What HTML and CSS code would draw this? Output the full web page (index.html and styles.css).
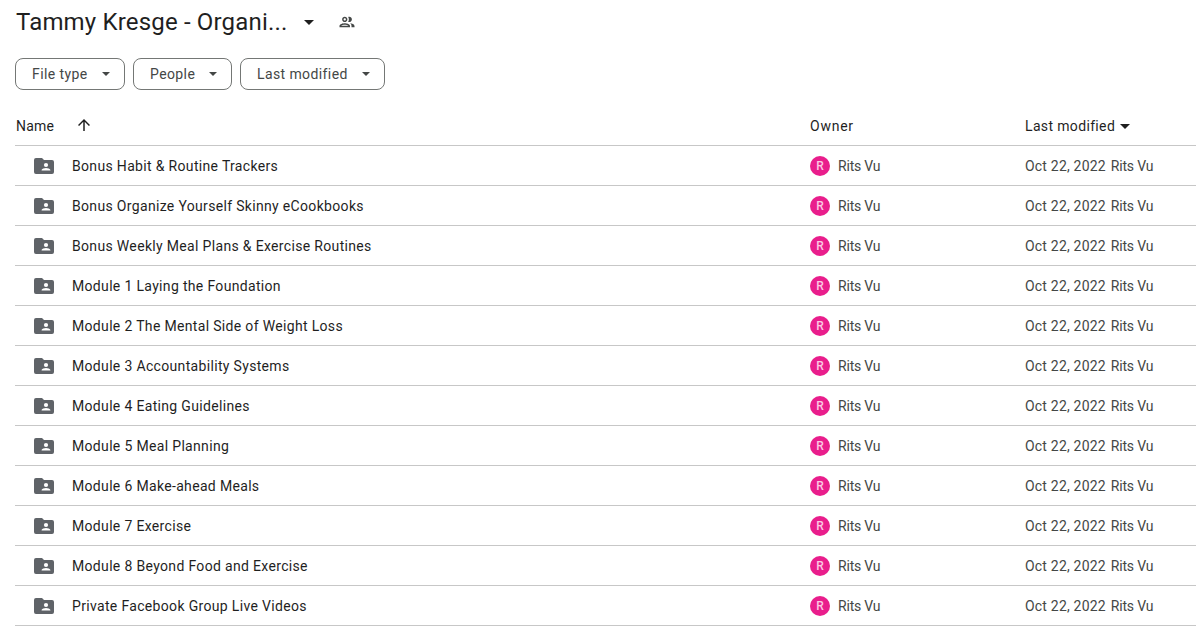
FILE: index.html
```html
<!DOCTYPE html>
<html lang="en">
<head>
<meta charset="utf-8">
<title>Tammy Kresge - Organize Yourself Skinny</title>
<link rel="stylesheet" href="styles.css">
</head>
<body>
<div class="page">
  <header class="title-bar">
    <h1 class="title">Tammy Kresge - Organi...</h1>
    <svg class="title-caret" viewBox="0 0 10 5"><path d="M0 0h10L5 5z"/></svg>
    <svg class="shared-icon" viewBox="0 0 24 24"><path d="M9 13.75c-2.34 0-7 1.17-7 3.5V19h14v-1.75c0-2.33-4.66-3.5-7-3.5zM4.34 17c.84-.58 2.87-1.25 4.66-1.25s3.82.67 4.66 1.25H4.34zM9 12c1.93 0 3.5-1.57 3.5-3.5S10.93 5 9 5 5.5 6.57 5.5 8.5 7.07 12 9 12zm0-5c.83 0 1.5.67 1.5 1.5S9.83 10 9 10s-1.5-.67-1.5-1.5S8.17 7 9 7zm7.04 6.81c1.16.84 1.96 1.96 1.96 3.44V19h4v-1.75c0-2.02-3.5-3.17-5.96-3.44zM15 12c1.93 0 3.5-1.57 3.5-3.5S16.93 5 15 5c-.54 0-1.04.13-1.5.35.63.89 1 1.98 1 3.15s-.37 2.26-1 3.15c.46.22.96.35 1.5.35z"/></svg>
  </header>
  <div class="filters">
    <button class="chip chip-type">File type<svg class="chip-caret" viewBox="0 0 10 5"><path d="M0 0h10L5 5z"/></svg></button>
    <button class="chip chip-people">People<svg class="chip-caret" viewBox="0 0 10 5"><path d="M0 0h10L5 5z"/></svg></button>
    <button class="chip chip-modified">Last modified<svg class="chip-caret" viewBox="0 0 10 5"><path d="M0 0h10L5 5z"/></svg></button>
  </div>
  <div class="table">
    <div class="row head">
      <div class="col-name">Name<svg class="sort-arrow" viewBox="0 0 24 24"><path d="M4 12l1.41 1.41L11 7.83V20h2V7.83l5.58 5.59L20 12l-8-8-8 8z"/></svg></div>
      <div class="col-owner">Owner</div>
      <div class="col-date">Last modified<svg class="head-caret" viewBox="0 0 10 5"><path d="M0 0h10L5 5z"/></svg></div>
    </div>
    <div class="row"><div class="col-name"><svg class="folder" viewBox="0 0 20 16"><path d="M2 0h6l2 2h8a2 2 0 0 1 2 2v10a2 2 0 0 1-2 2H2a2 2 0 0 1-2-2V2a2 2 0 0 1 2-2z"/><circle class="fig" cx="12" cy="7" r="2.1"/><path class="fig" d="M7.6 12.6v-.6c0-1.4 2.9-2.1 4.4-2.1s4.4.7 4.4 2.1v.6z"/></svg><span>Bonus Habit &amp; Routine Trackers</span></div><div class="col-owner"><span class="avatar">R</span><span class="person">Rits Vu</span></div><div class="col-date"><span class="date">Oct 22, 2022</span><span class="person">Rits Vu</span></div></div>
    <div class="row"><div class="col-name"><svg class="folder" viewBox="0 0 20 16"><path d="M2 0h6l2 2h8a2 2 0 0 1 2 2v10a2 2 0 0 1-2 2H2a2 2 0 0 1-2-2V2a2 2 0 0 1 2-2z"/><circle class="fig" cx="12" cy="7" r="2.1"/><path class="fig" d="M7.6 12.6v-.6c0-1.4 2.9-2.1 4.4-2.1s4.4.7 4.4 2.1v.6z"/></svg><span>Bonus Organize Yourself Skinny eCookbooks</span></div><div class="col-owner"><span class="avatar">R</span><span class="person">Rits Vu</span></div><div class="col-date"><span class="date">Oct 22, 2022</span><span class="person">Rits Vu</span></div></div>
    <div class="row"><div class="col-name"><svg class="folder" viewBox="0 0 20 16"><path d="M2 0h6l2 2h8a2 2 0 0 1 2 2v10a2 2 0 0 1-2 2H2a2 2 0 0 1-2-2V2a2 2 0 0 1 2-2z"/><circle class="fig" cx="12" cy="7" r="2.1"/><path class="fig" d="M7.6 12.6v-.6c0-1.4 2.9-2.1 4.4-2.1s4.4.7 4.4 2.1v.6z"/></svg><span>Bonus Weekly Meal Plans &amp; Exercise Routines</span></div><div class="col-owner"><span class="avatar">R</span><span class="person">Rits Vu</span></div><div class="col-date"><span class="date">Oct 22, 2022</span><span class="person">Rits Vu</span></div></div>
    <div class="row"><div class="col-name"><svg class="folder" viewBox="0 0 20 16"><path d="M2 0h6l2 2h8a2 2 0 0 1 2 2v10a2 2 0 0 1-2 2H2a2 2 0 0 1-2-2V2a2 2 0 0 1 2-2z"/><circle class="fig" cx="12" cy="7" r="2.1"/><path class="fig" d="M7.6 12.6v-.6c0-1.4 2.9-2.1 4.4-2.1s4.4.7 4.4 2.1v.6z"/></svg><span>Module 1 Laying the Foundation</span></div><div class="col-owner"><span class="avatar">R</span><span class="person">Rits Vu</span></div><div class="col-date"><span class="date">Oct 22, 2022</span><span class="person">Rits Vu</span></div></div>
    <div class="row"><div class="col-name"><svg class="folder" viewBox="0 0 20 16"><path d="M2 0h6l2 2h8a2 2 0 0 1 2 2v10a2 2 0 0 1-2 2H2a2 2 0 0 1-2-2V2a2 2 0 0 1 2-2z"/><circle class="fig" cx="12" cy="7" r="2.1"/><path class="fig" d="M7.6 12.6v-.6c0-1.4 2.9-2.1 4.4-2.1s4.4.7 4.4 2.1v.6z"/></svg><span>Module 2 The Mental Side of Weight Loss</span></div><div class="col-owner"><span class="avatar">R</span><span class="person">Rits Vu</span></div><div class="col-date"><span class="date">Oct 22, 2022</span><span class="person">Rits Vu</span></div></div>
    <div class="row"><div class="col-name"><svg class="folder" viewBox="0 0 20 16"><path d="M2 0h6l2 2h8a2 2 0 0 1 2 2v10a2 2 0 0 1-2 2H2a2 2 0 0 1-2-2V2a2 2 0 0 1 2-2z"/><circle class="fig" cx="12" cy="7" r="2.1"/><path class="fig" d="M7.6 12.6v-.6c0-1.4 2.9-2.1 4.4-2.1s4.4.7 4.4 2.1v.6z"/></svg><span>Module 3 Accountability Systems</span></div><div class="col-owner"><span class="avatar">R</span><span class="person">Rits Vu</span></div><div class="col-date"><span class="date">Oct 22, 2022</span><span class="person">Rits Vu</span></div></div>
    <div class="row"><div class="col-name"><svg class="folder" viewBox="0 0 20 16"><path d="M2 0h6l2 2h8a2 2 0 0 1 2 2v10a2 2 0 0 1-2 2H2a2 2 0 0 1-2-2V2a2 2 0 0 1 2-2z"/><circle class="fig" cx="12" cy="7" r="2.1"/><path class="fig" d="M7.6 12.6v-.6c0-1.4 2.9-2.1 4.4-2.1s4.4.7 4.4 2.1v.6z"/></svg><span>Module 4 Eating Guidelines</span></div><div class="col-owner"><span class="avatar">R</span><span class="person">Rits Vu</span></div><div class="col-date"><span class="date">Oct 22, 2022</span><span class="person">Rits Vu</span></div></div>
    <div class="row"><div class="col-name"><svg class="folder" viewBox="0 0 20 16"><path d="M2 0h6l2 2h8a2 2 0 0 1 2 2v10a2 2 0 0 1-2 2H2a2 2 0 0 1-2-2V2a2 2 0 0 1 2-2z"/><circle class="fig" cx="12" cy="7" r="2.1"/><path class="fig" d="M7.6 12.6v-.6c0-1.4 2.9-2.1 4.4-2.1s4.4.7 4.4 2.1v.6z"/></svg><span>Module 5 Meal Planning</span></div><div class="col-owner"><span class="avatar">R</span><span class="person">Rits Vu</span></div><div class="col-date"><span class="date">Oct 22, 2022</span><span class="person">Rits Vu</span></div></div>
    <div class="row"><div class="col-name"><svg class="folder" viewBox="0 0 20 16"><path d="M2 0h6l2 2h8a2 2 0 0 1 2 2v10a2 2 0 0 1-2 2H2a2 2 0 0 1-2-2V2a2 2 0 0 1 2-2z"/><circle class="fig" cx="12" cy="7" r="2.1"/><path class="fig" d="M7.6 12.6v-.6c0-1.4 2.9-2.1 4.4-2.1s4.4.7 4.4 2.1v.6z"/></svg><span>Module 6 Make-ahead Meals</span></div><div class="col-owner"><span class="avatar">R</span><span class="person">Rits Vu</span></div><div class="col-date"><span class="date">Oct 22, 2022</span><span class="person">Rits Vu</span></div></div>
    <div class="row"><div class="col-name"><svg class="folder" viewBox="0 0 20 16"><path d="M2 0h6l2 2h8a2 2 0 0 1 2 2v10a2 2 0 0 1-2 2H2a2 2 0 0 1-2-2V2a2 2 0 0 1 2-2z"/><circle class="fig" cx="12" cy="7" r="2.1"/><path class="fig" d="M7.6 12.6v-.6c0-1.4 2.9-2.1 4.4-2.1s4.4.7 4.4 2.1v.6z"/></svg><span>Module 7 Exercise</span></div><div class="col-owner"><span class="avatar">R</span><span class="person">Rits Vu</span></div><div class="col-date"><span class="date">Oct 22, 2022</span><span class="person">Rits Vu</span></div></div>
    <div class="row"><div class="col-name"><svg class="folder" viewBox="0 0 20 16"><path d="M2 0h6l2 2h8a2 2 0 0 1 2 2v10a2 2 0 0 1-2 2H2a2 2 0 0 1-2-2V2a2 2 0 0 1 2-2z"/><circle class="fig" cx="12" cy="7" r="2.1"/><path class="fig" d="M7.6 12.6v-.6c0-1.4 2.9-2.1 4.4-2.1s4.4.7 4.4 2.1v.6z"/></svg><span>Module 8 Beyond Food and Exercise</span></div><div class="col-owner"><span class="avatar">R</span><span class="person">Rits Vu</span></div><div class="col-date"><span class="date">Oct 22, 2022</span><span class="person">Rits Vu</span></div></div>
    <div class="row"><div class="col-name"><svg class="folder" viewBox="0 0 20 16"><path d="M2 0h6l2 2h8a2 2 0 0 1 2 2v10a2 2 0 0 1-2 2H2a2 2 0 0 1-2-2V2a2 2 0 0 1 2-2z"/><circle class="fig" cx="12" cy="7" r="2.1"/><path class="fig" d="M7.6 12.6v-.6c0-1.4 2.9-2.1 4.4-2.1s4.4.7 4.4 2.1v.6z"/></svg><span>Private Facebook Group Live Videos</span></div><div class="col-owner"><span class="avatar">R</span><span class="person">Rits Vu</span></div><div class="col-date"><span class="date">Oct 22, 2022</span><span class="person">Rits Vu</span></div></div>
  </div>
</div>
</body>
</html>
```
FILE: styles.css
```css
* { box-sizing: border-box; }
html, body { margin: 0; padding: 0; background: #fff; overflow: hidden; }
body { font-family: Roboto, "Noto Sans", sans-serif; color: #444746; }
.page { width: 1196px; height: 637px; padding-left: 15px; }
.title-bar { display: flex; align-items: center; height: 44px; }
.title { margin: 0; font-weight: 400; font-size: 24px; letter-spacing: 0.17px; color: #1f1f1f; padding-left: 1px; width: 288px; white-space: nowrap; }
.title-caret { width: 10px; height: 5px; fill: #1f1f1f; margin-left: 1px; }
.shared-icon { width: 18px; height: 18px; fill: #444746; margin-left: 24px; }
.filters { display: flex; gap: 8px; margin-top: 14px; }
.chip { display: flex; align-items: center; justify-content: space-between; height: 32px; padding: 0 14px 0 16px; border: 1px solid #747775; border-radius: 8px; background: #fff; font: 400 14px Roboto, sans-serif; letter-spacing: 0.4px; color: #444746; }
.chip-type { width: 110px; }
.chip-people { width: 99px; }
.chip-modified { width: 145px; }
.chip-caret { width: 8px; height: 4px; fill: #444746; }
.table { margin-top: 15px; }
.row { display: flex; align-items: center; height: 40px; border-bottom: 1px solid #c7c7c7; font-size: 14px; letter-spacing: 0.2px; }
.row.head { height: 41px; padding-top: 2px; color: #1f1f1f; }
.col-name { width: 795px; display: flex; align-items: center; padding-left: 1px; color: #1f1f1f; letter-spacing: 0.33px; }
.col-owner { width: 215px; display: flex; align-items: center; }
.col-date { display: flex; align-items: center; }
.head .col-name { letter-spacing: 0.2px; }
.head .col-owner { color: #1f1f1f; letter-spacing: 0.75px; }
.head .col-date { color: #1f1f1f; letter-spacing: 0.35px; }
.person { letter-spacing: -0.2px; }
.sort-arrow { width: 18px; height: 18px; fill: #1f1f1f; margin: -2px 0 0 21px; }
.head-caret { width: 10px; height: 5px; fill: #1f1f1f; margin-left: 5px; }
.folder { width: 20px; height: 16px; fill: #5f6368; margin: 0 18px 0 18px; flex: none; }
.folder .fig { fill: #fff; }
.avatar { width: 20px; height: 20px; border-radius: 50%; background: #e91e8c; color: #fbc9e2; font-size: 12px; font-weight: 500; letter-spacing: 0; display: flex; align-items: center; justify-content: center; margin-right: 8px; }
.date { margin-right: 5px; }
```
